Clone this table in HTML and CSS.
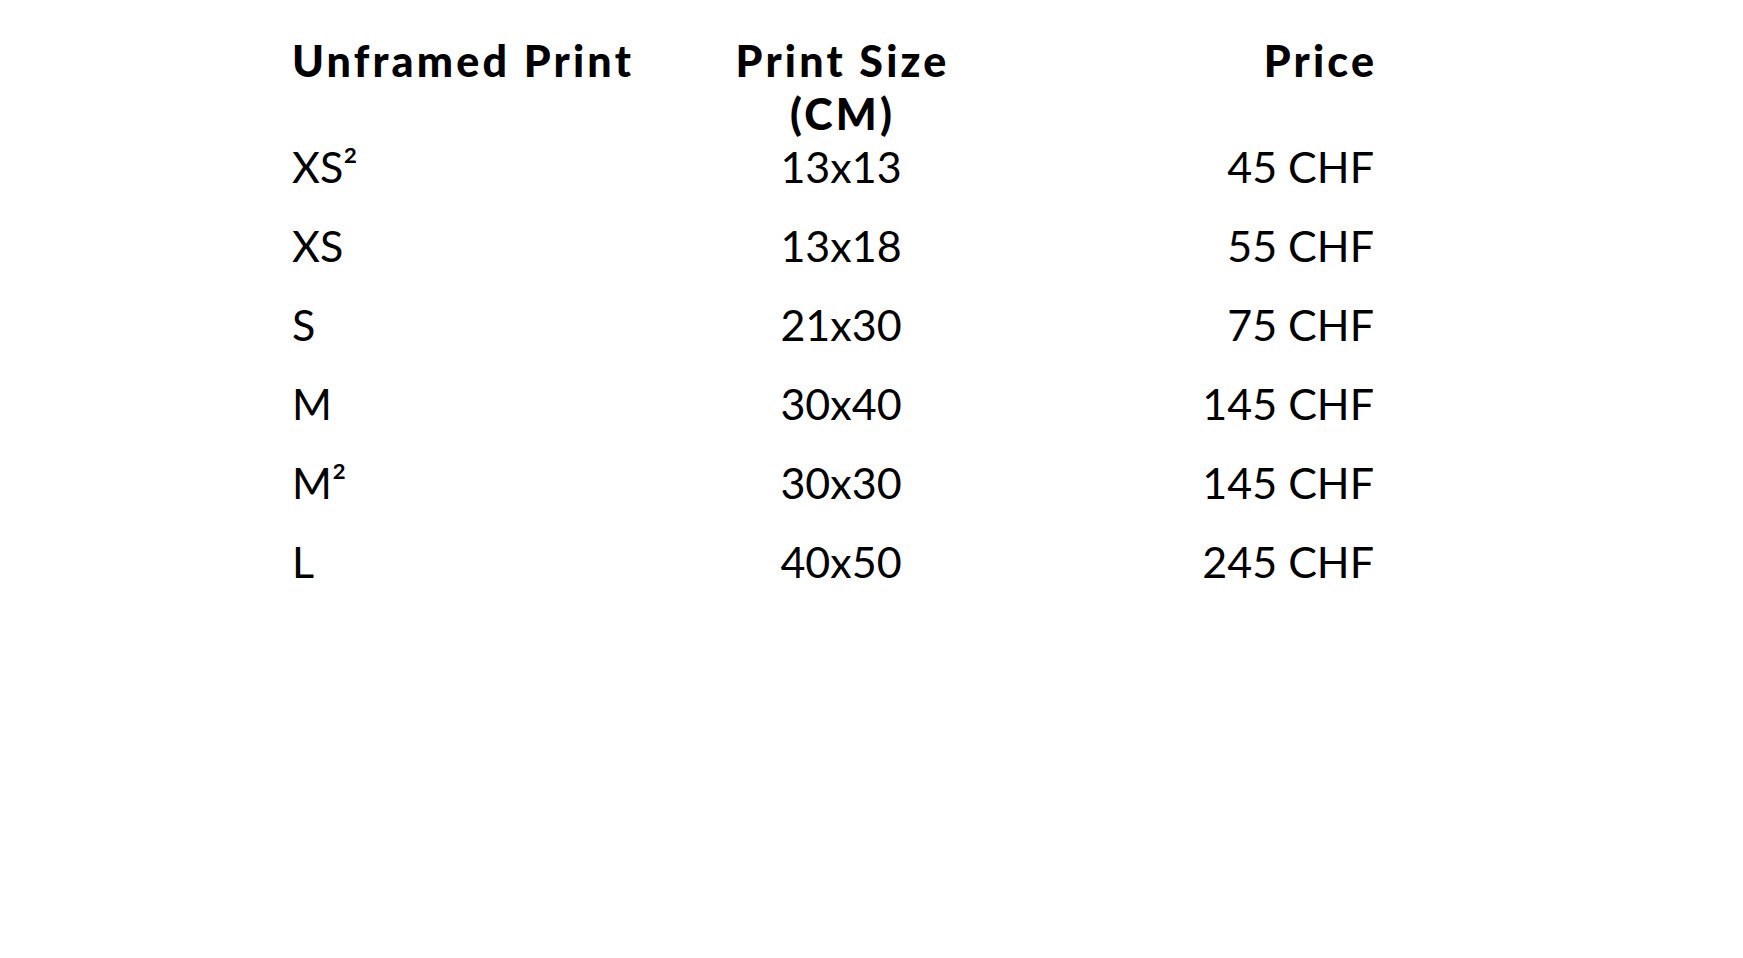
FILE: index.html
```html
<!DOCTYPE html>
<html lang="en">
<head>
<meta charset="utf-8">
<title>Unframed Print Prices</title>
<link rel="stylesheet" href="styles.css">
</head>
<body>
<main class="page">
  <div class="price-table">
    <div class="cell head left">Unframed Print</div>
    <div class="cell head center">Print Size<br>(CM)</div>
    <div class="cell head right">Price</div>

    <div class="cell left">XS²</div>
    <div class="cell center">13x13</div>
    <div class="cell right">45 CHF</div>

    <div class="cell left">XS</div>
    <div class="cell center">13x18</div>
    <div class="cell right">55 CHF</div>

    <div class="cell left">S</div>
    <div class="cell center">21x30</div>
    <div class="cell right">75 CHF</div>

    <div class="cell left">M</div>
    <div class="cell center">30x40</div>
    <div class="cell right">145 CHF</div>

    <div class="cell left">M²</div>
    <div class="cell center">30x30</div>
    <div class="cell right">145 CHF</div>

    <div class="cell left">L</div>
    <div class="cell center">40x50</div>
    <div class="cell right">245 CHF</div>
  </div>
</main>
</body>
</html>
```
FILE: styles.css
```css
html, body {
  margin: 0;
  padding: 0;
  background: #ffffff;
}

body {
  font-family: "Lato", "Open Sans", "Liberation Sans", sans-serif;
  color: #000000;
}

.page {
  padding: 34px 0 0 292px;
}

.price-table {
  width: 1082px;
  display: grid;
  grid-template-columns: 372px 354px 356px;
  row-gap: 26px;
  font-size: 43px;
  line-height: 53px;
}

.cell.head {
  font-weight: 900;
  letter-spacing: 3.2px;
  margin-bottom: -26px;
}

.cell.head.right {
  margin-right: -3.2px;
}

.cell.head.center {
  margin-right: -3.2px;
}

.left { text-align: left; }
.center { text-align: center; }
.right { text-align: right; }
```
